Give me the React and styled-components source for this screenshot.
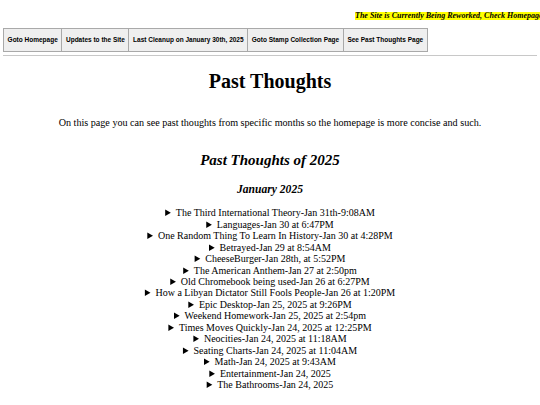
import React from "react";
import styled, { createGlobalStyle } from "styled-components";

const Global = createGlobalStyle`
  html, body { margin: 0; padding: 0; background: #fff; }
  body { font-family: "Liberation Serif", "Times New Roman", serif; color: #000; overflow: hidden; }
  #root { padding: 0 3px; }
`;

const Banner = styled.div`
  padding: 11.7px 0 0 352px;
  margin-right: -3px;
  height: 8.3px;
  white-space: nowrap;
  overflow: hidden;
  font-size: 8px;
  line-height: 8.3px;
  font-weight: bold;
  font-style: italic;
`;

const Highlight = styled.span`
  display: inline-block;
  vertical-align: top;
  height: 8.3px;
  line-height: 8.6px;
  background: #ffff00;
`;

const NavBar = styled.nav`
  display: flex;
  margin-top: 8.3px;
`;

const NavButton = styled.div`
  font-family: "Liberation Sans", Arial, sans-serif;
  font-weight: bold;
  font-size: 6.5px;
  line-height: 7px;
  padding: 7.2px 3.6px;
  background: #efefef;
  border: 1px solid #a9a9a9;
  border-left: ${(p) => (p.$first ? "1px solid #a9a9a9" : "none")};
  white-space: nowrap;
  color: #000;
`;

const Rule = styled.hr`
  margin: 3.6px 0 0;
  border: 0;
  border-top: 1px solid #c8c8c8;
  height: 0;
`;

const Main = styled.main`
  text-align: center;
`;

const Title = styled.h1`
  margin: 14px 0 0;
  font-size: 20px;
  line-height: 23px;
  font-weight: bold;
`;

const Intro = styled.p`
  margin: 24px 0 0;
  font-size: 10.15px;
  line-height: 11.67px;
`;

const YearTitle = styled.h2`
  margin: 23.4px 0 0;
  font-size: 15px;
  line-height: 17px;
  font-weight: bold;
  font-style: italic;
`;

const MonthTitle = styled.h3`
  margin: 13.2px 0 0;
  font-size: 11.6px;
  line-height: 13px;
  font-weight: bold;
  font-style: italic;
`;

const List = styled.div`
  margin-top: 11.7px;
  font-size: 10px;
  line-height: 11.47px;
`;

const Entry = styled.details`
  summary {
    cursor: pointer;
  }
`;

const navItems = [
  "Goto Homepage",
  "Updates to the Site",
  "Last Cleanup on January 30th, 2025",
  "Goto Stamp Collection Page",
  "See Past Thoughts Page",
];

const entries = [
  "The Third International Theory-Jan 31th-9:08AM",
  "Languages-Jan 30 at 6:47PM",
  "One Random Thing To Learn In History-Jan 30 at 4:28PM",
  "Betrayed-Jan 29 at 8:54AM",
  "CheeseBurger-Jan 28th, at 5:52PM",
  "The American Anthem-Jan 27 at 2:50pm",
  "Old Chromebook being used-Jan 26 at 6:27PM",
  "How a Libyan Dictator Still Fools People-Jan 26 at 1:20PM",
  "Epic Desktop-Jan 25, 2025 at 9:26PM",
  "Weekend Homework-Jan 25, 2025 at 2:54pm",
  "Times Moves Quickly-Jan 24, 2025 at 12:25PM",
  "Neocities-Jan 24, 2025 at 11:18AM",
  "Seating Charts-Jan 24, 2025 at 11:04AM",
  "Math-Jan 24, 2025 at 9:43AM",
  "Entertainment-Jan 24, 2025",
  "The Bathrooms-Jan 24, 2025",
];

export default function App() {
  return (
    <>
      <Global />
      <Banner>
        <Highlight>The Site is Currently Being Reworked, Check Homepage for more info</Highlight>
      </Banner>
      <NavBar>
        {navItems.map((t, i) => (
          <NavButton key={t} $first={i === 0}>
            {t}
          </NavButton>
        ))}
      </NavBar>
      <Rule />
      <Main>
        <Title>Past Thoughts</Title>
        <Intro>
          On this page you can see past thoughts from specific months so the homepage is more concise and such.
        </Intro>
        <YearTitle>Past Thoughts of 2025</YearTitle>
        <MonthTitle>January 2025</MonthTitle>
        <List>
          {entries.map((e) => (
            <Entry key={e}>
              <summary>{e}</summary>
            </Entry>
          ))}
        </List>
      </Main>
    </>
  );
}
